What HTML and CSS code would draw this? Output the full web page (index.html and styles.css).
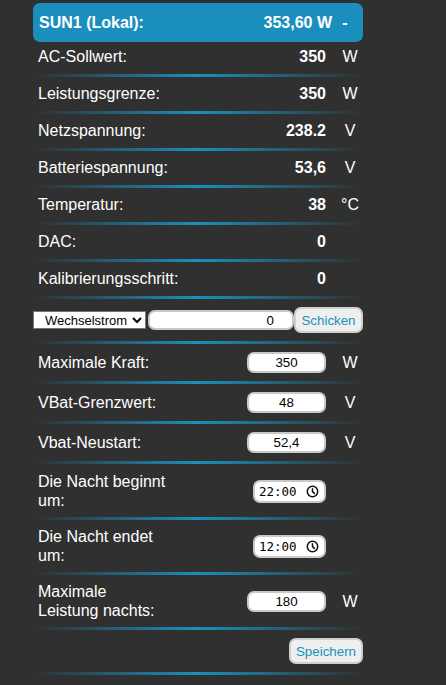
FILE: index.html
```html
<!DOCTYPE html>
<html lang="de">
<head>
    <meta charset="UTF-8">
    <meta name="viewport" content="width=device-width, initial-scale=1.0">
    <title>SUN1</title>
    <link rel="stylesheet" href="styles.css">
</head>
<body>
    <div class="panel">
        <div class="header">
            <span class="header-name">SUN1 (Lokal):</span>
            <span class="header-value">353,60 W</span>
            <span class="header-unit">-</span>
        </div>

        <div class="row">
            <span class="label">AC-Sollwert:</span>
            <span class="value">350</span>
            <span class="unit">W</span>
        </div>
        <div class="row">
            <span class="label">Leistungsgrenze:</span>
            <span class="value">350</span>
            <span class="unit">W</span>
        </div>
        <div class="row">
            <span class="label">Netzspannung:</span>
            <span class="value">238.2</span>
            <span class="unit">V</span>
        </div>
        <div class="row">
            <span class="label">Batteriespannung:</span>
            <span class="value">53,6</span>
            <span class="unit">V</span>
        </div>
        <div class="row">
            <span class="label">Temperatur:</span>
            <span class="value">38</span>
            <span class="unit">°C</span>
        </div>
        <div class="row">
            <span class="label">DAC:</span>
            <span class="value">0</span>
            <span class="unit"></span>
        </div>
        <div class="row">
            <span class="label">Kalibrierungsschritt:</span>
            <span class="value">0</span>
            <span class="unit"></span>
        </div>

        <div class="send-row">
            <select class="mode-select">
                <option>Wechselstrom</option>
                <option>Gleichstrom</option>
            </select>
            <input class="send-input" type="text" value="0">
            <button class="light-button">Schicken</button>
        </div>

        <div class="row input-row">
            <span class="label">Maximale Kraft:</span>
            <input class="num-input" type="text" value="350">
            <span class="unit">W</span>
        </div>
        <div class="row input-row">
            <span class="label">VBat-Grenzwert:</span>
            <input class="num-input" type="text" value="48">
            <span class="unit">V</span>
        </div>
        <div class="row input-row">
            <span class="label">Vbat-Neustart:</span>
            <input class="num-input" type="text" value="52,4">
            <span class="unit">V</span>
        </div>
        <div class="row tall-row">
            <span class="label wrap">Die Nacht beginnt um:</span>
            <span class="time-box">
                <span class="time-text">22:00</span>
                <svg class="clock" width="13" height="13" viewBox="0 0 13 13">
                    <circle cx="6.5" cy="6.5" r="5.2" fill="none" stroke="#111" stroke-width="1.5"/>
                    <path d="M6.5 3.2 V6.6 L8.8 8.9" fill="none" stroke="#111" stroke-width="1.5"/>
                </svg>
            </span>
            <span class="unit"></span>
        </div>
        <div class="row tall-row">
            <span class="label wrap">Die Nacht endet um:</span>
            <span class="time-box">
                <span class="time-text">12:00</span>
                <svg class="clock" width="13" height="13" viewBox="0 0 13 13">
                    <circle cx="6.5" cy="6.5" r="5.2" fill="none" stroke="#111" stroke-width="1.5"/>
                    <path d="M6.5 3.2 V6.6 L8.8 8.9" fill="none" stroke="#111" stroke-width="1.5"/>
                </svg>
            </span>
            <span class="unit"></span>
        </div>
        <div class="row tall-row">
            <span class="label wrap">Maximale Leistung nachts:</span>
            <input class="num-input" type="text" value="180">
            <span class="unit">W</span>
        </div>

        <div class="save-row">
            <button class="light-button">Speichern</button>
        </div>
    </div>
</body>
</html>
```

FILE: styles.css
```css
body {
    margin: 0;
    padding: 0;
    background-color: #303030;
    color: #ffffff;
    font-family: "Liberation Sans", Arial, sans-serif;
    font-size: 16px;
}

.panel {
    width: 330px;
    margin-left: 33px;
    padding-top: 3px;
}

/* Top bar */
.header {
    display: flex;
    align-items: center;
    height: 39px;
    padding: 0 5px 0 6px;
    background: #1a8fbd;
    border-radius: 7px;
    font-weight: bold;
}

.header-name {
    flex: 1;
}

.header-unit {
    width: 26px;
    text-align: center;
}

/* Rows, each with the glowing line underneath */
.row,
.send-row,
.save-row {
    background: linear-gradient(to right, rgba(26, 143, 189, 0), #1a8fbd 50%, rgba(26, 143, 189, 0)) bottom / 100% 3px no-repeat;
}

.row {
    display: grid;
    grid-template-columns: 1fr auto 26px;
    column-gap: 11px;
    align-items: center;
    line-height: 19px;
    padding: 5px 0 11px 5px;
    margin-bottom: 2px;
}

.input-row {
    padding-bottom: 11px;
    margin-bottom: 3px;
}

.tall-row {
    padding-bottom: 10px;
    margin-bottom: 2px;
}

.label.wrap {
    max-width: 132px;
}

.value {
    text-align: right;
    font-weight: bold;
}

.unit {
    text-align: center;
}

.num-input {
    box-sizing: border-box;
    width: 79px;
    height: 21px;
    padding: 0 2px;
    border: 2px solid #c9c9c9;
    border-radius: 7px;
    background: #ffffff;
    text-align: center;
    font-family: "Liberation Sans", Arial, sans-serif;
    font-size: 13.33px;
    color: #000000;
}

.time-box {
    box-sizing: border-box;
    display: flex;
    align-items: center;
    justify-content: space-between;
    width: 73px;
    height: 23px;
    padding: 0 5px 0 4px;
    border: 2px solid #c9c9c9;
    border-radius: 7px;
    background: #ffffff;
}

.time-text {
    font-family: "DejaVu Sans Mono", monospace;
    font-size: 12.5px;
    color: #000000;
}

.clock {
    display: block;
}

/* Send line */
.send-row {
    display: flex;
    align-items: center;
    padding: 6px 0 11px 0;
    margin-bottom: 3px;
}

.mode-select {
    box-sizing: border-box;
    width: 113px;
    height: 18px;
    margin-right: 2px;
    padding-left: 7px;
    font-family: "Liberation Sans", Arial, sans-serif;
    font-size: 13px;
    color: #000000;
    border: 1px solid #767676;
    border-radius: 0;
    background: #ffffff;
}

.send-input {
    box-sizing: border-box;
    width: 146px;
    height: 20px;
    padding: 0 18px 0 6px;
    border: 2px solid #c9c9c9;
    border-radius: 7px;
    text-align: right;
    font-family: "Liberation Sans", Arial, sans-serif;
    font-size: 13.33px;
    color: #000000;
}

.light-button {
    box-sizing: border-box;
    height: 26px;
    padding: 0 4px;
    background: #efefef;
    border: 2px solid #cfcfcf;
    border-radius: 7px;
    color: #1a8fbd;
    font-family: "Liberation Sans", Arial, sans-serif;
    font-size: 13.33px;
    cursor: pointer;
}

.send-row .light-button {
    width: 69px;
}

.save-row {
    display: flex;
    justify-content: flex-end;
    padding: 6px 0 11px 0;
}

.save-row .light-button {
    width: 74px;
}
```
